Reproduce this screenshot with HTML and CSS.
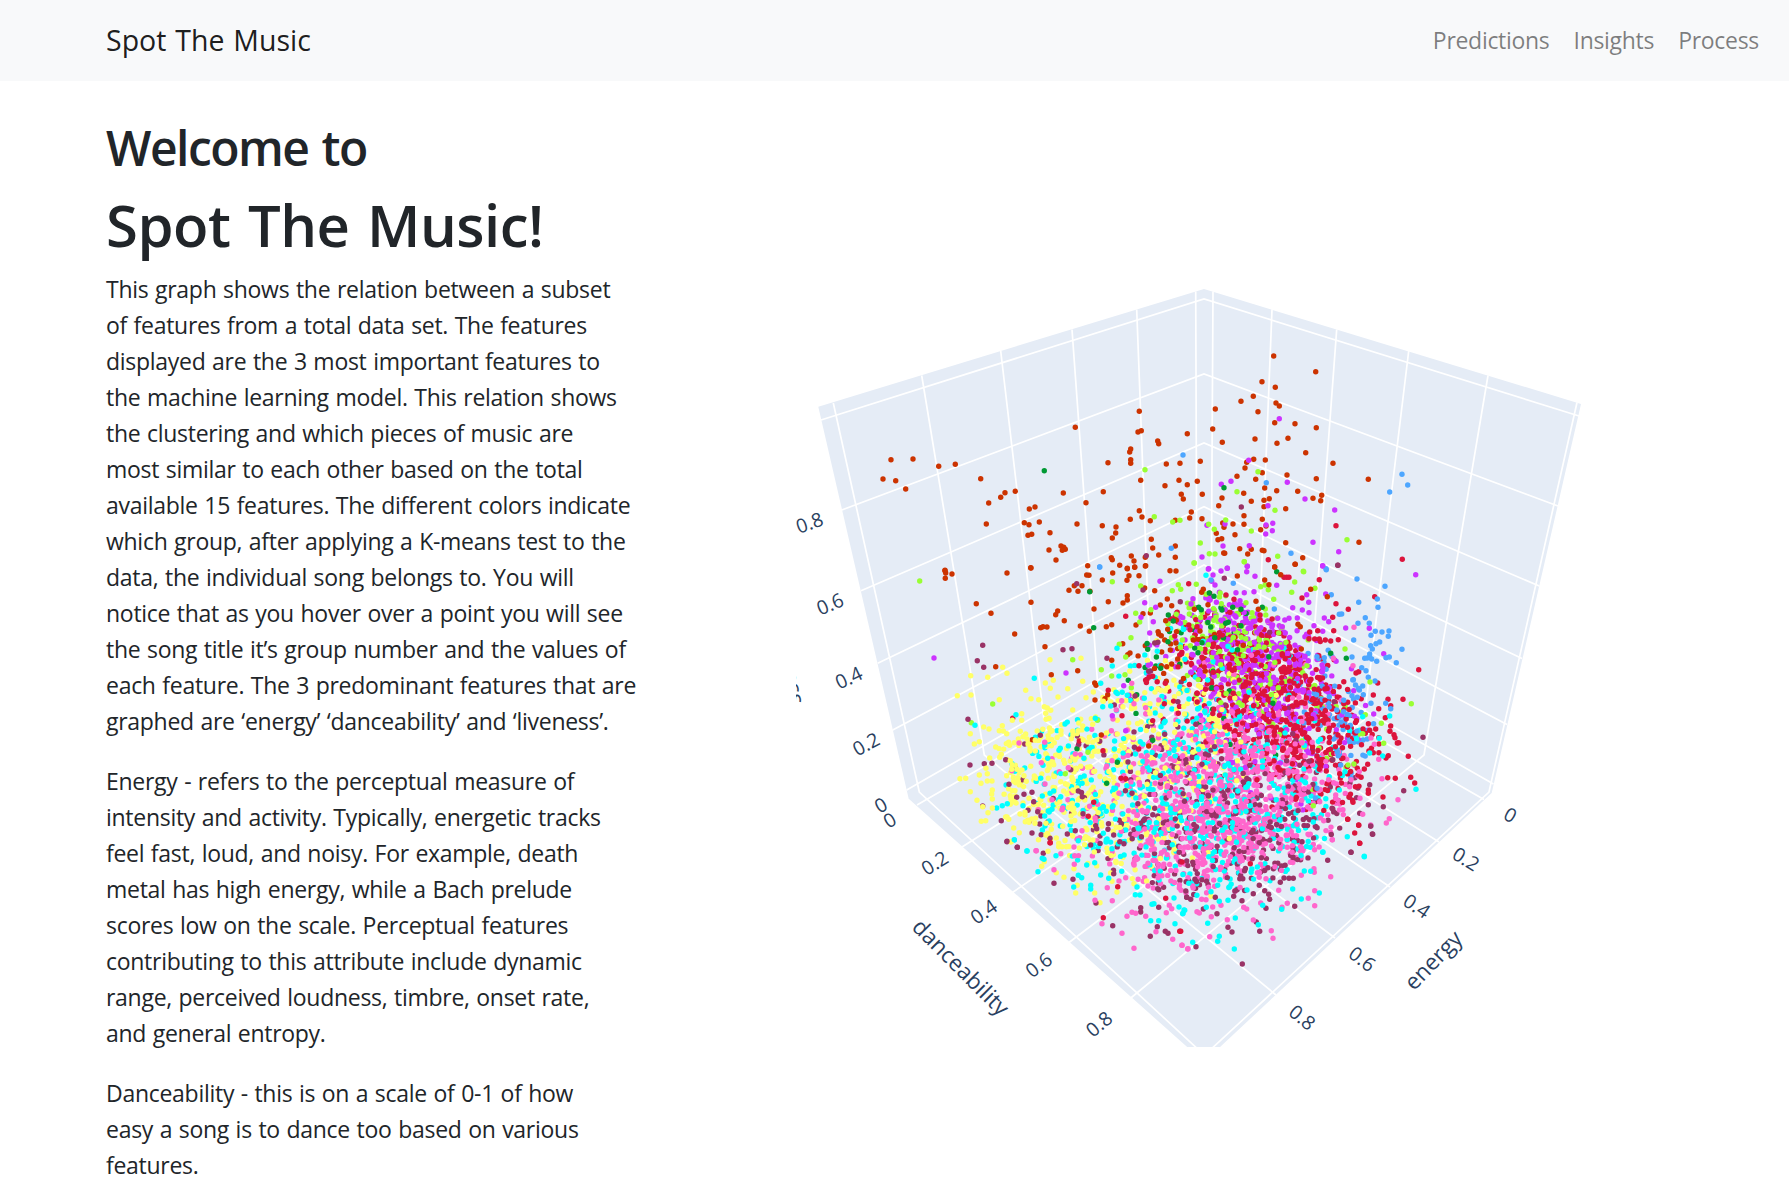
FILE: index.html
```html
<!DOCTYPE html>
<html lang="en">
<head>
<meta charset="utf-8">
<title>Spot The Music</title>
<link rel="stylesheet" href="styles.css">
</head>
<body>
<nav class="navbar">
  <a class="brand">Spot The Music</a>
  <div class="links"><a class="l1">Predictions</a><a class="l2">Insights</a><a class="l3">Process</a></div>
</nav>
<main class="content">
  <section class="intro">
    <h2>Welcome to</h2>
    <h1>Spot The Music!</h1>
    <p>This graph shows the relation between a subset<br>of features from a total data set. The features<br>displayed are the 3 most important features to<br>the machine learning model. This relation shows<br>the clustering and which pieces of music are<br>most similar to each other based on the total<br>available 15 features. The different colors indicate<br>which group, after applying a K-means test to the<br>data, the individual song belongs to. You will<br>notice that as you hover over a point you will see<br>the song title it’s group number and the values of<br>each feature. The 3 predominant features that are<br>graphed are ‘energy’ ‘danceability’ and ‘liveness’.</p>
    <p>Energy - refers to the perceptual measure of<br>intensity and activity. Typically, energetic tracks<br>feel fast, loud, and noisy. For example, death<br>metal has high energy, while a Bach prelude<br>scores low on the scale. Perceptual features<br>contributing to this attribute include dynamic<br>range, perceived loudness, timbre, onset rate,<br>and general entropy.</p>
    <p>Danceability - this is on a scale of 0-1 of how<br>easy a song is to dance too based on various<br>features.</p>
  </section>
  <svg class="chart" width="820" height="847" viewBox="796 200 820 847">
    <polygon class="walls" points="1204,289 1581,404 1491.7,793 1204,1062 908.7,798.7 818.3,406.7"/>
    <g class="grid">
      <polyline points="821,420 1204,299 1579,416"/>
      <polyline points="841.7,510 1204,374 1558,506"/>
      <polyline points="861,590.7 1204,443 1539.3,586"/>
      <polyline points="877.7,663.3 1204,506.7 1522,658.5"/>
      <polyline points="892.7,730 1204,565 1507,724.5"/>
      <polyline points="906.7,790 1204,619 1493.5,784"/>
      <polyline points="833.3,403 919.3,792 1201,1052"/>
      <polyline points="921.7,375.5 984.3,755 1276,995"/>
      <polyline points="1000.7,351 1044,720 1335,938"/>
      <polyline points="1072,329.5 1098,689 1390,887"/>
      <polyline points="1136.7,309.5 1150,660 1439,842"/>
      <polyline points="1195.7,291.5 1197,635 1484,799.5"/>
      <polyline points="1213,291.5 1211,635 917,805"/>
      <polyline points="1272,309.5 1258,660 962,847"/>
      <polyline points="1336.7,329.5 1310,689 1011,893.5"/>
      <polyline points="1408.7,351 1364,720 1065.7,945"/>
      <polyline points="1488,375.5 1424,755 1126,1002"/>
      <polyline points="1577,402.5 1489,792 1208,1052"/>
    </g>
    <g id="points"></g>
    <g class="tick">
      <text transform="translate(809.5 522.7) rotate(-20)" dy=".36em">0.8</text>
      <text transform="translate(830 604) rotate(-23)" dy=".36em">0.6</text>
      <text transform="translate(848.7 677.7) rotate(-25)" dy=".36em">0.4</text>
      <text transform="translate(866 744) rotate(-28)" dy=".36em">0.2</text>
      <text transform="translate(880.7 805) rotate(-30)" dy=".36em">0</text>
      <text transform="translate(889.7 820) rotate(-31)" dy=".36em">0</text>
      <text transform="translate(934.7 863) rotate(-32)" dy=".36em">0.2</text>
      <text transform="translate(983.7 911.7) rotate(-35)" dy=".36em">0.4</text>
      <text transform="translate(1038.7 965) rotate(-37)" dy=".36em">0.6</text>
      <text transform="translate(1099 1024) rotate(-40)" dy=".36em">0.8</text>
      <text transform="translate(1510.3 815) rotate(30)" dy=".36em">0</text>
      <text transform="translate(1466 859) rotate(32)" dy=".36em">0.2</text>
      <text transform="translate(1416.7 906) rotate(34)" dy=".36em">0.4</text>
      <text transform="translate(1362.3 959) rotate(37)" dy=".36em">0.6</text>
      <text transform="translate(1302.3 1017.3) rotate(39)" dy=".36em">0.8</text>
    </g>
    <g class="axis">
      <text transform="translate(960 968) rotate(45)" dy=".3em">danceability</text>
      <text transform="translate(1434 961) rotate(-46)" dy=".3em">energy</text>
      <text transform="translate(790 706) rotate(77)">liveness</text>
    </g>
  </svg>
</main>
<script src="chart.js"></script>
</body>
</html>
```
FILE: styles.css
```css
* { box-sizing: border-box; }
body {
  margin: 0;
  background: #fff;
  color: #212529;
  font: 400 23px/36px "Open Sans", "Noto Sans", sans-serif;
  height: 1198px;
  overflow: hidden;
}
.navbar {
  height: 81px;
  padding: 0 30px 2px 106px;
  background: #f8f9fa;
  display: flex;
  align-items: center;
  justify-content: space-between;
}
.brand { font-size: 28.5px; color: rgba(0, 0, 0, .9); letter-spacing: 0; word-spacing: 1.5px; }
.links { display: flex; gap: 24px; color: rgba(0, 0, 0, .5); letter-spacing: -.3px; }
.content { display: flex; align-items: flex-start; }
.intro {
  width: 690px;
  flex: none;
  margin-right: 106px;
  padding: 38px 0 0 106px;
  white-space: nowrap;
}
h1, h2 { margin: 0 0 12px; font-weight: 600; line-height: 1.2; }
h2 { font-size: 48px; line-height: 58px; letter-spacing: -1.5px; word-spacing: 2px; }
h1 { font-size: 58px; line-height: 72px; letter-spacing: -.5px; word-spacing: 3px; margin-bottom: 10px; }
p { margin: 0 0 24px; letter-spacing: -.28px; word-spacing: .9px; }
.chart { display: block; flex: none; margin-top: 119px; overflow: hidden; }
.walls { fill: #e5ecf6; }
.grid { fill: none; stroke: #fff; stroke-width: 1.7; }
.tick, .axis { fill: #2a3f5f; font-family: "Open Sans", sans-serif; font-weight: 500; }
.tick { font-size: 19.5px; text-anchor: middle; }
.axis { font-size: 22.5px; }
.axis text { text-anchor: middle; }
.axis text:last-child { text-anchor: end; }
```
FILE: chart.js
```js
const colors = {
  o: '#cc3300', r: '#dc143c', v: '#cc33ff', l: '#99ff33', c: '#00ffff',
  y: '#ffff66', p: '#ff66cc', m: '#993366', b: '#4da6ff', g: '#009933'
};

// Outlying songs, stored per tile in thirds of a pixel from the tile origin.
const tiles = [
  { at: [790, 270], pts: {
    o: '303,569 369,567 446,589 496,583 279,627 317,632 347,657 572,626 596,699 632,682 645,668 676,664 589,762 718,717 735,711 703,758 717,764 748,756 714,796 725,793 780,788 777,840 813,828 821,832 826,838 817,841 798,870 722,893 820,669 861,762 856,472 888,698 940,665 954,578 1048,424 1044,486 1054,482 1022,537 1019,546 1022,569 1022,580 1103,513 1106,521 1129,582 1170,580 1052,631 1125,647 1167,631 1174,673 1180,687 1048,722 1056,741 1081,752 1021,748 937,767 978,771 977,789 967,804 1084,808 1088,834 1024,858 1032,873 1034,891 1066,862 1066,888 1106,855 1156,828 1156,862 964,863 967,869 989,886 1012,895 893,887 1156,751 465,901',
    g: '763,602', b: '1179,555 1144,835 929,891', l: '1065,599 1093,740 1170,751 1148,756', m: '1069,857' } },
  { at: [1180, 270], pts: {
    o: '281,258 407,305 246,335 286,352 220,379 183,394 288,399 298,408 234,425 106,417 98,477 127,517 22,491 284,458 345,461 409,473 225,507 291,520 324,505 377,548 61,574 221,568 200,577 256,570 195,594 247,608 171,619 227,628 321,615 409,626 459,580 565,628 52,634 22,644 67,673 126,684 116,707 191,670 214,694 254,654 290,662 353,664 252,691 268,686 252,710 317,716 399,685 425,676 422,692 34,726 29,744 66,746 192,737 247,748 128,759 132,772 159,762 192,763 242,779 258,768 109,790 114,809 125,806 165,794 317,818 537,817 179,836 214,838 203,852 131,849 134,850 247,841 252,842 345,883 368,863 284,891',
    r: '468,767 667,868 265,869',
    v: '298,446 206,571 153,634 124,643 322,637 375,687 264,707 464,720 81,766 135,762 258,765 278,760 277,782 257,792 399,817 476,845 129,828 208,827 66,861 202,889 142,895 85,897 428,887',
    l: '234,605 171,665 285,721 137,750 86,763 103,778 214,783 61,819 88,851 105,852 43,879 193,875 293,859 501,809 370,904',
    b: '666,613 683,645 629,666 259,638 333,850 438,896', g: '132,653', m: '184,711 473,886' } },
  { at: [790, 560], pts: {
    o: '465,32 467,39 486,42 466,55 559,131 603,160 651,39 723,24 723,127 674,222 765,260 797,164 803,153 823,182 752,203 759,200 771,201 871,198 898,214 949,200 965,194 890,45 897,46 853,77 876,77 837,91 864,94 900,94 912,147 937,60 968,39 955,125 999,129 1012,107 1012,120 1017,47 1011,61 1047,47 1012,26 1034,22 1067,17 1064,84 1059,161 1081,159 1038,195 1094,92 1140,32 1158,33 1132,117 1111,135 1145,137 1127,182 1159,181 1133,208 1106,222 1114,227 1124,240 1158,249 1141,270 1115,276 998,251 1013,284 1020,279 965,301 863,332 784,344 617,320 914,369 918,376 915,420 945,416 953,404 934,525 727,539 1076,558 1163,297 1145,312 1130,320',
    l: '389,63 608,432 544,488 848,299 967,65 1052,78 1037,160 1049,186 1023,233 988,253 1007,291 934,329 965,348 1005,344 1024,383 922,481 894,577 826,641 1165,74 1147,92 1172,88 1159,163 1083,149 1177,240',
    v: '432,294 828,339 1110,64 1064,128 1097,142 1053,172 1090,185 1079,219 1001,377 1017,406 1075,316 967,467 1007,512',
    b: '929,21',
    g: '911,203 899,95 1135,165 1150,183 1073,268 1015,361 1040,404 861,566 950,670 982,607 1088,541 1112,325 1134,245',
    m: '578,256 562,302 581,322 534,478 819,269 846,266 951,295 860,71 1059,90 1094,249 1171,125 1076,334 1035,408 973,435 751,526 704,552 540,615 583,611 606,610 647,599 657,673 680,712 702,703 726,697 731,725 714,751 743,755 753,768 749,792 634,782 651,845 682,862 726,819 578,738 842,629 929,544 866,553 877,710 865,693 879,761 832,822 856,812 780,835 760,880 920,806 902,855 971,825',
    r: '1007,169 668,475 1047,317 955,391 868,543 939,572 1046,567 996,467 781,848 993,655 1007,656 1078,351 1088,349 895,769 911,727 1123,431 1126,370',
    c: '733,355 678,464 555,496 825,492 916,475 981,265 967,318 932,370 978,397 962,438 1102,274 1012,406 620,744 637,737 652,731 699,737 711,873 673,840 764,556 807,571 811,565 704,624 752,655 763,673 666,611 759,616 773,595 757,708 764,768 765,798 780,700 791,693 812,710 1181,208',
    y: '780,299 873,295 638,322 651,340 542,347 593,352 502,407 543,405 628,419 707,391 723,416 746,419 766,369 781,385 790,361 833,386 804,411 878,364 888,413 910,396 1019,334 763,440 772,444 782,451 767,460 777,475 768,478 848,450 695,461 695,481 667,481 637,497 581,501 597,507 628,512 640,513 650,521 541,521 568,545 553,552 617,561 634,583 599,594 588,625 568,645 592,641 510,656 527,655 573,670 592,663 606,663 541,695 561,721 607,690 605,702 607,717 607,744 594,758 574,784 587,782 578,740 691,514 707,522 699,530 711,537 685,537 736,541 714,552 720,564 720,573 736,573 661,602 667,614 665,628 681,628 696,630 722,619 670,652 684,653 702,647 677,668 685,664 709,664 733,648 667,692 675,692 661,707 675,727 647,771 656,778 671,804 688,818 663,845 651,771 705,757 690,762 717,787 725,777 786,512 813,512 813,523 848,514 849,524 878,498 908,493 940,424 788,606 791,614 824,610 821,601 855,600 848,591 893,546 880,540 908,546 920,540 775,655 792,649 812,665 832,674 761,736 780,720 846,652 872,619 831,702 851,745 822,757 843,768 818,799 784,808 773,820 799,834 806,860 868,864 848,828 887,830 768,790 735,790',
    p: '764,547 687,549 754,608 765,672 739,872 818,744 856,582 835,623 786,719 816,749 876,812 852,861 995,422 979,450 966,602 1025,370 1032,431' } },
  { at: [1180, 560], pts: {
    v: '707,44 611,281 568,205 433,174 446,185 497,204 428,18 437,102 402,197 428,214 380,104 386,127 367,150 387,158 338,143 290,76 202,19 225,49 200,35 142,25 86,26 123,33 99,45 95,64 105,75 327,175 352,174 293,175 307,200 193,98 168,98 222,95 164,130 180,122 171,135 39,116 33,132',
    r: '716,329 669,418 584,110 418,59 468,131 505,148 458,172 461,212 475,239 413,212 389,216 366,114 312,52 320,52 327,52 26,71 593,369 580,405 624,418 632,437 596,446 616,473 632,498 630,514 642,524 645,533 652,549 656,548 685,589 692,652 704,669 609,711 623,653 646,655 625,587 618,594 553,627 580,578 587,507 556,520 549,507 565,690 565,700 507,711 519,727 536,795 524,819 539,850 503,778 418,237 436,240 452,243 387,236 536,335 240,180 162,118 138,105',
    b: '531,57 615,79 592,117 594,142 536,127 485,162 478,163 556,173 534,190 568,190 586,214 606,216 627,213 625,229 573,226 521,240 666,268 599,246 588,251 572,257 577,267 569,282 554,295 562,294 569,291 575,297 590,304 618,293 628,291 649,308 516,291 545,323 558,332 565,352 548,378 550,404 532,412 573,430 617,430 632,446 585,363 535,385 439,29 454,104 160,70 93,60 283,147 411,290 433,293 516,407 482,615 411,685',
    m: '729,532 474,16 671,692 610,740 572,798 577,822 513,877 565,734 569,674 539,760 133,55 269,217',
    l: '694,431 570,366 495,267 611,550 548,521 556,464 604,490 344,66 371,35 193,5 42,9 49,73 335,97 265,89 281,118 242,80 256,75 504,615 522,612 400,737 405,85 28,162 256,147 198,128',
    g: '290,35 88,99 102,109 56,142 64,149 158,142 126,150 183,148 247,142 452,280 499,295 145,187 137,190 92,201 183,197 104,233 66,248 54,278',
    o: '346,13 284,21 302,44 172,48 254,60 267,74 392,88 442,110 70,88 65,97 228,124 235,148 43,148 354,193 361,200 60,213 40,240 364,267 190,256',
    c: '78,46 629,468 569,579 608,588 708,688 502,830 553,889 478,690 495,635 548,470 10,208 144,259 428,877 400,786',
    p: '522,202 519,317 654,719 606,656 628,776 619,789 596,598 583,553 540,715 509,680 457,839 548,763 460,295 431,782 443,764 572,795 467,705' } },
  { at: [790, 800], pts: {
    y: '822,232 857,279 914,279 930,308 981,276 763,185 755,199 799,218 852,206 774,154 663,125 806,130 768,105 816,140 862,256 966,244 1032,251',
    c: '744,215 711,153 673,119 865,226 875,233 851,261 902,256 902,267 995,214 1041,261 1036,284 1050,285 1086,313 1092,311 1082,362 1106,362 1155,371 1179,340 1182,330 1167,321 757,175 762,178 798,167 932,225 956,235 1152,294 890,195',
    m: '792,250 849,238 918,309 968,377 1052,323 1052,336 1081,409 1102,380 1126,394 1134,400 1106,322 1103,266 651,124 682,142 971,221 1190,292',
    r: '780,128 940,353 983,260 1127,295 1169,394 1176,186',
    p: '738,152 792,209 915,301 967,302 952,263 987,243 1007,233 936,371 996,400 1032,445 1011,349 1026,337 1037,340 1067,349 1098,395 1148,418 1176,436 1194,446 1129,338 1145,326 1138,316 854,167 853,193 1074,258 1168,264' } },
  { at: [1180, 800], pts: {
    m: '513,157 443,181 578,103 572,78 340,235 327,235 312,234 344,319 301,247 266,283 269,298 258,325 238,256 254,272 186,302 111,341 144,382 156,396 229,366 239,394 187,492 48,440 70,327 161,289 220,281 32,298 20,292 106,292',
    p: '452,230 457,119 402,206 403,217 404,272 385,295 404,317 322,310 306,322 296,271 274,392 279,415 220,360 142,359 89,410 23,447 6,436 191,322 200,327 242,309 94,350 51,335 58,339 123,316 98,321 65,298 78,299 364,226',
    c: '553,170 429,156 418,279 392,214 373,213 364,297 338,267 305,328 235,374 248,316 166,354 118,409 113,424 163,447 38,427 83,370 14,331 8,341 79,322 118,304 144,301 93,275 201,270 149,260 113,256',
    r: '539,130 536,76 2,394 211,191 503,58' } }
];

// Dense clusters: colour, count, centre, spread along x and y, slant.
const clusters = [
  ['v', 460, 1250, 658, 46, 42, .6], ['l', 210, 1240, 650, 46, 36, .6],
  ['r', 680, 1278, 700, 54, 44, .45], ['b', 80, 1342, 705, 22, 28, .3],
  ['p', 860, 1222, 812, 68, 50, -.05], ['p', 150, 1245, 745, 50, 30, 0],
  ['m', 400, 1235, 825, 78, 58, 0], ['c', 520, 1190, 800, 85, 54, .05],
  ['c', 60, 1190, 690, 50, 40, .3],
  ['y', 280, 1085, 800, 50, 45, .4], ['y', 200, 1170, 725, 50, 42, .2],
  ['g', 30, 1210, 640, 45, 48, .2], ['o', 30, 1190, 640, 38, 28, 0]
];
const hull = [[990, 745], [1090, 715], [1112, 675], [1145, 645], [1182, 605], [1215, 590], [1290, 622], [1350, 660],
  [1372, 705], [1384, 745], [1360, 795], [1342, 827], [1300, 866], [1262, 885], [1240, 895], [1180, 898],
  [1125, 878], [1080, 866], [1040, 842], [1000, 805]];

let seed = 20417;
const rand = () => {
  seed = (seed * 1664525 + 1013904223) % 4294967296;
  return seed / 4294967296;
};
const gauss = () => Math.sqrt(-2 * Math.log(rand() + 1e-9)) * Math.cos(2 * Math.PI * rand());
const inside = (x, y) => {
  let hit = false;
  for (let i = 0, j = hull.length - 1; i < hull.length; j = i++) {
    const [ax, ay] = hull[i], [bx, by] = hull[j];
    if ((ay > y) !== (by > y) && x < (bx - ax) * (y - ay) / (by - ay) + ax) hit = !hit;
  }
  return hit;
};

const songs = [];
for (const [color, count, cx, cy, sx, sy, slant] of clusters) {
  let placed = 0, tries = 0;
  while (placed < count && tries++ < count * 8) {
    const dx = gauss() * sx;
    const x = cx + dx, y = cy + gauss() * sy + dx * slant;
    if (!inside(x, y)) continue;
    songs.push([x, y, color, rand()]);
    placed++;
  }
}
songs.sort((a, b) => a[3] - b[3]);
for (const { at, pts } of tiles) {
  for (const color in pts) {
    for (const pair of pts[color].split(' ')) {
      const [x, y] = pair.split(',').map(Number);
      songs.push([at[0] + x / 3, at[1] + y / 3, color]);
    }
  }
}

const layer = document.getElementById('points');
for (const [x, y, color] of songs) {
  const dot = document.createElementNS('http://www.w3.org/2000/svg', 'circle');
  dot.setAttribute('cx', x.toFixed(1));
  dot.setAttribute('cy', y.toFixed(1));
  dot.setAttribute('r', 2.7);
  dot.setAttribute('fill', colors[color]);
  layer.appendChild(dot);
}
```
